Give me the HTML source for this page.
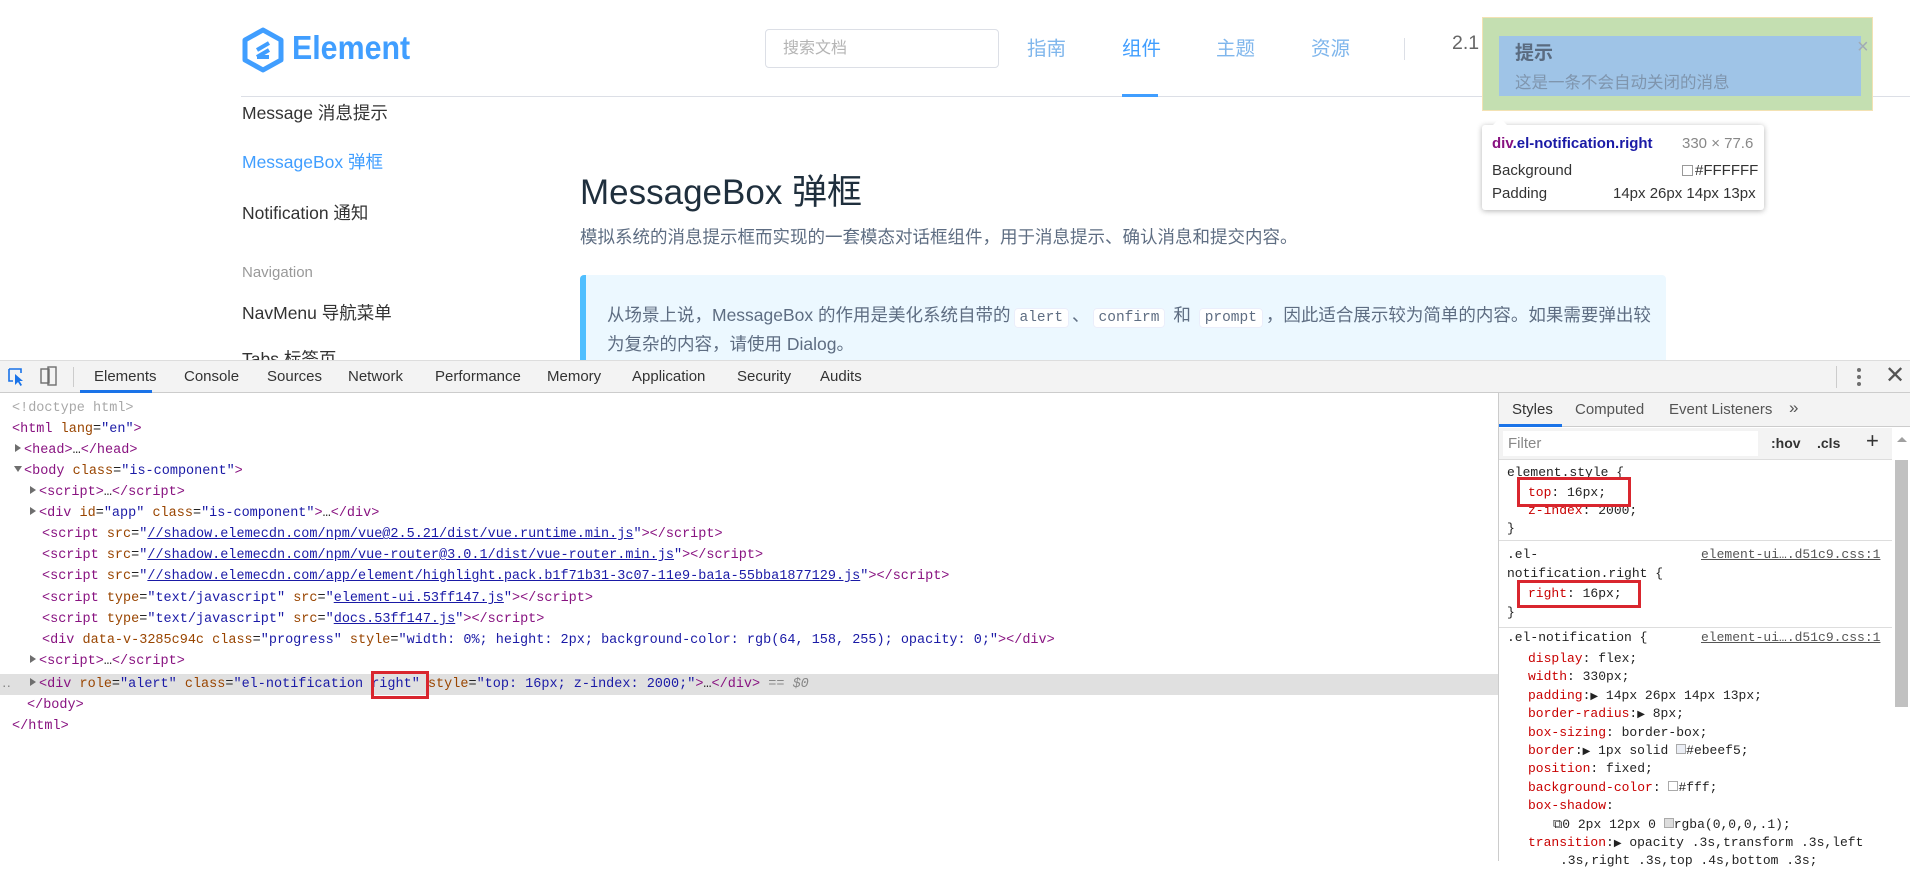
<!DOCTYPE html>
<html><head><meta charset="utf-8"><style>
*{margin:0;padding:0;box-sizing:border-box}
body{width:1910px;height:861px;overflow:hidden;background:#fff;position:relative;font-family:"Liberation Sans","Noto Sans CJK SC",sans-serif}
.a{position:absolute;white-space:nowrap}
.side{font-size:17.5px;color:#333;line-height:22px}
.ln{position:absolute;font-family:"Liberation Mono",monospace;font-size:13.5px;line-height:21px;height:21px;white-space:nowrap;color:#222}
.t{color:#881280}.n{color:#994500}.v{color:#1a1aa6}.u{color:#1a1aa6;text-decoration:underline}.g{color:#a8a8a8}
.tri{display:inline-block;width:0;height:0;border-left:6px solid #6e6e6e;border-top:4px solid transparent;border-bottom:4px solid transparent;margin-right:3px;vertical-align:1px}
.trd{display:inline-block;width:0;height:0;border-top:6px solid #6e6e6e;border-left:4px solid transparent;border-right:4px solid transparent;margin-right:2px;vertical-align:2px}
.sl{position:absolute;font-family:"Liberation Mono",monospace;font-size:13px;line-height:18px;white-space:nowrap;color:#222}
.p{color:#c80000}
.tab{position:absolute;top:360px;height:33px;line-height:33px;font-size:15px;color:#333}
code{font-family:"Liberation Mono",monospace;font-size:14.5px;background:#fff;border:1px solid #eaeefb;border-radius:4px;padding:1px 5px;color:#5e6d82;margin:0 3px}
</style></head><body>

<svg class="a" style="left:241px;top:27px" width="44" height="46" viewBox="0 0 44 46"><path d="M22 3 L40 13 L40 33 L22 43 L4 33 L4 13 Z" fill="none" stroke="#409eff" stroke-width="5" stroke-linejoin="round"/><path d="M16 30 L28 23 M16 23 L28 16 M16 30 L28 30" stroke="#409eff" stroke-width="4"/></svg>
<div class="a" style="left:292px;top:29px;font-size:33px;font-weight:bold;color:#409eff;transform:scaleX(0.92);transform-origin:left">Element</div>
<div class="a" style="left:765px;top:29px;width:234px;height:39px;border:1px solid #dcdfe6;border-radius:4px;font-size:16px;color:#b4b4b4;line-height:37px;padding-left:17px">搜索文档</div>
<div class="a" style="left:1027px;top:32px;font-size:19.5px;color:#7fb6ec">指南</div>
<div class="a" style="left:1122px;top:32px;font-size:19.5px;color:#409eff">组件</div>
<div class="a" style="left:1216px;top:32px;font-size:19.5px;color:#7fb6ec">主题</div>
<div class="a" style="left:1311px;top:32px;font-size:19.5px;color:#7fb6ec">资源</div>
<div class="a" style="left:1404px;top:38px;width:1px;height:22px;background:#dcdfe6"></div>
<div class="a" style="left:1452px;top:32px;font-size:19.5px;color:#666">2.1</div>
<div class="a" style="left:241px;top:96px;width:1669px;height:1px;background:#dcdfe6"></div>
<div class="a" style="left:1122px;top:94px;width:36px;height:3px;background:#409eff"></div>

<div class="a side" style="left:242px;top:102px">Message 消息提示</div>
<div class="a side" style="left:242px;top:151px;color:#409eff">MessageBox 弹框</div>
<div class="a side" style="left:242px;top:202px">Notification 通知</div>
<div class="a" style="left:242px;top:264px;font-size:15px;color:#999">Navigation</div>
<div class="a side" style="left:242px;top:302px">NavMenu 导航菜单</div>
<div class="a side" style="left:242px;top:348px">Tabs 标签页</div>

<div class="a" style="left:580px;top:164px;font-size:35px;color:#1f2f3d">MessageBox 弹框</div>
<div class="a" style="left:580px;top:224px;font-size:17.5px;color:#5e6d82">模拟系统的消息提示框而实现的一套模态对话框组件，用于消息提示、确认消息和提交内容。</div>
<div class="a" style="left:580px;top:275px;width:1086px;height:100px;background:#ecf8ff;border-left:6px solid #50bfff;border-radius:4px"></div>
<div class="a" style="left:607px;top:302px;font-size:17.5px;color:#5e6d82">从场景上说，MessageBox 的作用是美化系统自带的<code>alert</code>、<code>confirm</code> 和 <code>prompt</code>，因此适合展示较为简单的内容。如果需要弹出较</div>
<div class="a" style="left:607px;top:331px;font-size:17.5px;color:#5e6d82">为复杂的内容，请使用 Dialog。</div>

<div class="a" style="left:1482px;top:17px;width:391px;height:94px;background:#c4dfb1;border:1px solid #f3e2b3"></div>
<div class="a" style="left:1499px;top:36px;width:362px;height:60px;background:#9fc4e7"></div>
<div class="a" style="left:1515px;top:38px;font-size:19px;font-weight:bold;color:#5a6b80">提示</div>
<div class="a" style="left:1515px;top:69px;font-size:16.5px;color:#7f95ad">这是一条不会自动关闭的消息</div>
<div class="a" style="left:1857px;top:36px;font-size:20px;color:#a0aab5">×</div>

<div class="a" style="left:1482px;top:125px;width:282px;height:85px;background:#fff;border-radius:3px;box-shadow:0 1px 6px rgba(0,0,0,.3)"></div>
<div class="a" style="left:1492px;top:118px;width:0;height:0;border-left:8px solid transparent;border-right:8px solid transparent;border-bottom:8px solid #fff"></div>
<div class="a" style="left:1492px;top:135px;font-size:15px;font-weight:bold;color:#881280">div<span style="color:#1a1aa6">.el-notification.right</span></div>
<div class="a" style="left:1682px;top:135px;font-size:15px;color:#888">330 × 77.6</div>
<div class="a" style="left:1492px;top:162px;font-size:15px;color:#333">Background</div>
<div class="a" style="left:1682px;top:162px;font-size:15px;color:#333"><span style="display:inline-block;width:11px;height:11px;border:1px solid #999;vertical-align:-1px;margin-right:2px"></span>#FFFFFF</div>
<div class="a" style="left:1492px;top:185px;font-size:15px;color:#333">Padding</div>
<div class="a" style="left:1613px;top:185px;font-size:15px;color:#333">14px 26px 14px 13px</div>

<div class="a" style="left:0;top:360px;width:1910px;height:501px;background:#fff"></div>
<div class="a" style="left:0;top:360px;width:1910px;height:33px;background:#f3f3f3;border-bottom:1px solid #cccccc;border-top:1px solid #ddd"></div>
<svg class="a" style="left:7px;top:367px" width="20" height="20" viewBox="0 0 20 20"><path d="M2 2h12v4 M2 2v12h4" fill="none" stroke="#1a73e8" stroke-width="1.6"/><path d="M8 7 L8 18 L11 15 L13.5 19 L15 18 L12.5 14 L16 14 Z" fill="#1a73e8"/></svg>
<svg class="a" style="left:38px;top:365px" width="22" height="22" viewBox="0 0 22 22"><rect x="3" y="4" width="8" height="14" fill="none" stroke="#6e6e6e" stroke-width="1.4"/><rect x="10" y="2" width="8" height="18" fill="none" stroke="#6e6e6e" stroke-width="1.4"/></svg>
<div class="a" style="left:73px;top:367px;width:1px;height:20px;background:#ccc"></div>
<div class="a" style="left:80px;top:390px;width:72px;height:3px;background:#1a73e8"></div>
<div class="tab" style="left:94px">Elements</div>
<div class="tab" style="left:184px">Console</div>
<div class="tab" style="left:267px">Sources</div>
<div class="tab" style="left:348px">Network</div>
<div class="tab" style="left:435px">Performance</div>
<div class="tab" style="left:547px">Memory</div>
<div class="tab" style="left:632px">Application</div>
<div class="tab" style="left:737px">Security</div>
<div class="tab" style="left:820px">Audits</div>
<div class="a" style="left:1836px;top:366px;width:1px;height:22px;background:#ccc"></div>
<div class="a" style="left:1857px;top:368px;width:4px;height:4px;border-radius:2px;background:#6e6e6e;box-shadow:0 7px 0 #6e6e6e,0 14px 0 #6e6e6e"></div>
<div class="a" style="left:1885px;top:362px;font-size:24px;color:#555;line-height:28px">✕</div>

<div class="a" style="left:0;top:674px;width:1498px;height:21px;background:#e0e0e0"></div>
<div class="ln" style="left:12px;top:398px"><span class="g">&lt;!doctype html&gt;</span></div>
<div class="ln" style="left:12px;top:419px"><span class="t">&lt;html</span> <span class="n">lang</span>=<span class="v">"en"</span><span class="t">&gt;</span></div>
<div class="ln" style="left:15px;top:440px"><span class="tri"></span><span class="t">&lt;head&gt;</span>…<span class="t">&lt;/head&gt;</span></div>
<div class="ln" style="left:14px;top:461px"><span class="trd"></span><span class="t">&lt;body</span> <span class="n">class</span>=<span class="v">"is-component"</span><span class="t">&gt;</span></div>
<div class="ln" style="left:30px;top:482px"><span class="tri"></span><span class="t">&lt;script&gt;</span>…<span class="t">&lt;/script&gt;</span></div>
<div class="ln" style="left:30px;top:503px"><span class="tri"></span><span class="t">&lt;div</span> <span class="n">id</span>=<span class="v">"app"</span> <span class="n">class</span>=<span class="v">"is-component"</span><span class="t">&gt;</span>…<span class="t">&lt;/div&gt;</span></div>
<div class="ln" style="left:42px;top:524px"><span class="t">&lt;script</span> <span class="n">src</span>=<span class="v">"</span><span class="u">//shadow.elemecdn.com/npm/vue@2.5.21/dist/vue.runtime.min.js</span><span class="v">"</span><span class="t">&gt;&lt;/script&gt;</span></div>
<div class="ln" style="left:42px;top:545px"><span class="t">&lt;script</span> <span class="n">src</span>=<span class="v">"</span><span class="u">//shadow.elemecdn.com/npm/vue-router@3.0.1/dist/vue-router.min.js</span><span class="v">"</span><span class="t">&gt;&lt;/script&gt;</span></div>
<div class="ln" style="left:42px;top:566px"><span class="t">&lt;script</span> <span class="n">src</span>=<span class="v">"</span><span class="u">//shadow.elemecdn.com/app/element/highlight.pack.b1f71b31-3c07-11e9-ba1a-55bba1877129.js</span><span class="v">"</span><span class="t">&gt;&lt;/script&gt;</span></div>
<div class="ln" style="left:42px;top:588px"><span class="t">&lt;script</span> <span class="n">type</span>=<span class="v">"text/javascript"</span> <span class="n">src</span>=<span class="v">"</span><span class="u">element-ui.53ff147.js</span><span class="v">"</span><span class="t">&gt;&lt;/script&gt;</span></div>
<div class="ln" style="left:42px;top:609px"><span class="t">&lt;script</span> <span class="n">type</span>=<span class="v">"text/javascript"</span> <span class="n">src</span>=<span class="v">"</span><span class="u">docs.53ff147.js</span><span class="v">"</span><span class="t">&gt;&lt;/script&gt;</span></div>
<div class="ln" style="left:42px;top:630px"><span class="t">&lt;div</span> <span class="n">data-v-3285c94c</span> <span class="n">class</span>=<span class="v">"progress"</span> <span class="n">style</span>=<span class="v">"width: 0%; height: 2px; background-color: rgb(64, 158, 255); opacity: 0;"</span><span class="t">&gt;&lt;/div&gt;</span></div>
<div class="ln" style="left:30px;top:651px"><span class="tri"></span><span class="t">&lt;script&gt;</span>…<span class="t">&lt;/script&gt;</span></div>
<div class="ln" style="left:2px;top:674px;color:#888">‥</div>
<div class="ln" style="left:30px;top:674px"><span class="tri"></span><span class="t">&lt;div</span> <span class="n">role</span>=<span class="v">"alert"</span> <span class="n">class</span>=<span class="v">"el-notification right"</span> <span class="n">style</span>=<span class="v">"top: 16px; z-index: 2000;"</span><span class="t">&gt;</span>…<span class="t">&lt;/div&gt;</span> <span style="color:#888">== <i>$0</i></span></div>
<div class="a" style="left:371px;top:671px;width:58px;height:28px;border:3px solid #d9262e"></div>
<div class="ln" style="left:27px;top:695px"><span class="t">&lt;/body&gt;</span></div>
<div class="ln" style="left:12px;top:716px"><span class="t">&lt;/html&gt;</span></div>

<div class="a" style="left:1498px;top:393px;width:1px;height:468px;background:#ccc"></div>
<div class="a" style="left:1499px;top:393px;width:411px;height:34px;background:#f3f3f3;border-bottom:1px solid #ccc"></div>
<div class="a" style="left:1499px;top:424px;width:63px;height:3px;background:#1a73e8"></div>
<div class="a" style="left:1512px;top:401px;font-size:15px;color:#333">Styles</div>
<div class="a" style="left:1575px;top:401px;font-size:15px;color:#555">Computed</div>
<div class="a" style="left:1669px;top:401px;font-size:15px;color:#555">Event Listeners</div>
<div class="a" style="left:1789px;top:398px;font-size:17px;color:#555">»</div>
<div class="a" style="left:1499px;top:428px;width:393px;height:32px;background:#f3f3f3;border-bottom:1px solid #ddd"></div>
<div class="a" style="left:1503px;top:431px;width:255px;height:25px;background:#fff;font-size:15px;color:#888;line-height:25px;padding-left:5px">Filter</div>
<div class="a" style="left:1771px;top:435px;font-size:14px;font-weight:bold;color:#333">:hov</div>
<div class="a" style="left:1817px;top:435px;font-size:14px;font-weight:bold;color:#333">.cls</div>
<div class="a" style="left:1866px;top:428px;font-size:22px;color:#333">+</div>
<div class="a" style="left:1895px;top:460px;width:13px;height:247px;background:#c1c1c1"></div>
<div class="a" style="left:1897px;top:437px;width:0;height:0;border-left:5px solid transparent;border-right:5px solid transparent;border-bottom:5px solid #a0a0a0"></div>

<div class="sl" style="left:1507px;top:464px;color:#222">element.style {</div>
<div class="sl" style="left:1528px;top:484px"><span class="p">top</span>: 16px;</div>
<div class="sl" style="left:1528px;top:502px"><span class="p">z-index</span>: 2000;</div>
<div class="sl" style="left:1507px;top:520px">}</div>
<div class="a" style="left:1517px;top:477px;width:114px;height:30px;border:3px solid #d9262e"></div>
<div class="a" style="left:1499px;top:540px;width:393px;height:1px;background:#ddd"></div>
<div class="sl" style="left:1507px;top:546px">.el-</div>
<div class="sl" style="left:1701px;top:546px;color:#555;text-decoration:underline">element-ui….d51c9.css:1</div>
<div class="sl" style="left:1507px;top:565px">notification.right {</div>
<div class="sl" style="left:1528px;top:585px"><span class="p">right</span>: 16px;</div>
<div class="sl" style="left:1507px;top:604px">}</div>
<div class="a" style="left:1517px;top:580px;width:124px;height:28px;border:3px solid #d9262e"></div>
<div class="a" style="left:1499px;top:627px;width:393px;height:1px;background:#ddd"></div>
<div class="sl" style="left:1507px;top:629px">.el-notification {</div>
<div class="sl" style="left:1701px;top:629px;color:#555;text-decoration:underline">element-ui….d51c9.css:1</div>
<div class="sl" style="left:1528px;top:650px"><span class="p">display</span>: flex;</div>
<div class="sl" style="left:1528px;top:668px"><span class="p">width</span>: 330px;</div>
<div class="sl" style="left:1528px;top:687px"><span class="p">padding</span>:<span style="font-size:10px">▶</span> 14px 26px 14px 13px;</div>
<div class="sl" style="left:1528px;top:705px"><span class="p">border-radius</span>:<span style="font-size:10px">▶</span> 8px;</div>
<div class="sl" style="left:1528px;top:724px"><span class="p">box-sizing</span>: border-box;</div>
<div class="sl" style="left:1528px;top:742px"><span class="p">border</span>:<span style="font-size:10px">▶</span> 1px solid <span style="display:inline-block;width:10px;height:10px;border:1px solid #aaa;background:#ebeef5"></span>#ebeef5;</div>
<div class="sl" style="left:1528px;top:760px"><span class="p">position</span>: fixed;</div>
<div class="sl" style="left:1528px;top:779px"><span class="p">background-color</span>: <span style="display:inline-block;width:10px;height:10px;border:1px solid #aaa"></span>#fff;</div>
<div class="sl" style="left:1528px;top:797px"><span class="p">box-shadow</span>:</div>
<div class="sl" style="left:1553px;top:816px">⧉0 2px 12px 0 <span style="display:inline-block;width:10px;height:10px;border:1px solid #aaa;background:#ddd"></span>rgba(0,0,0,.1);</div>
<div class="sl" style="left:1528px;top:834px"><span class="p">transition</span>:<span style="font-size:10px">▶</span> opacity .3s,transform .3s,left</div>
<div class="sl" style="left:1560px;top:852px">.3s,right .3s,top .4s,bottom .3s;</div>
</body></html>
